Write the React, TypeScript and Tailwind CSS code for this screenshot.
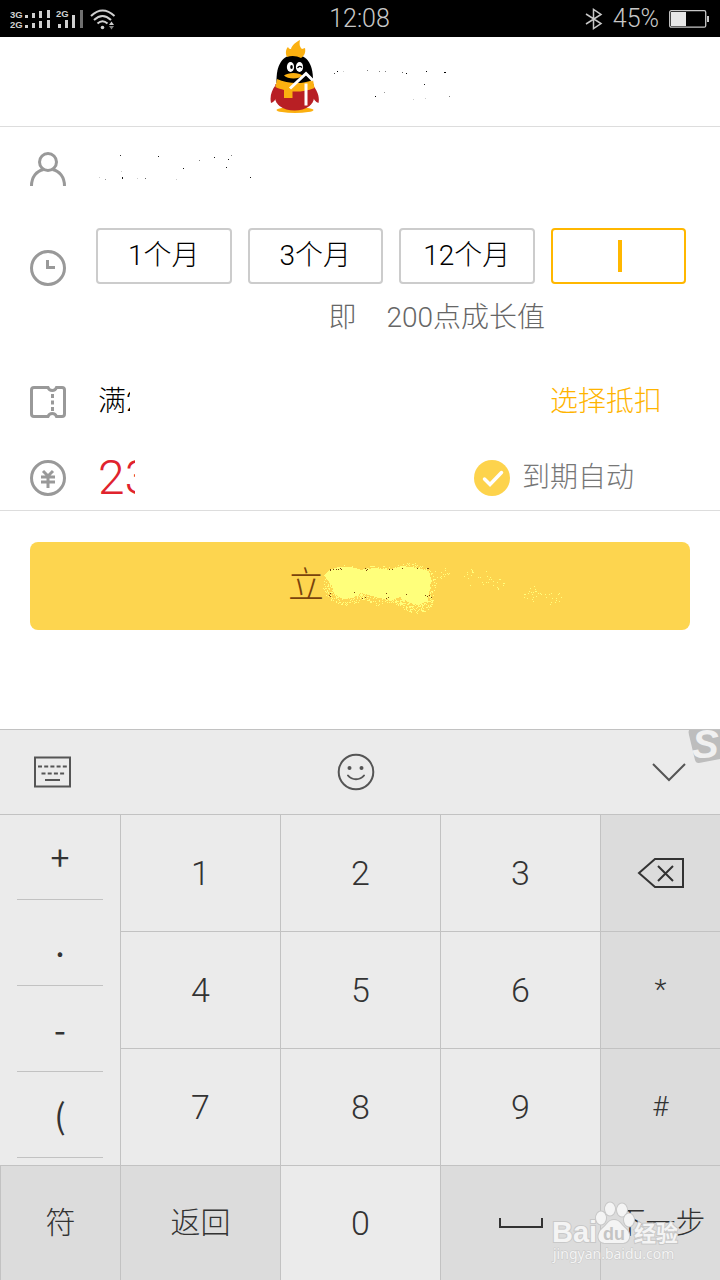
import { useState } from "react";
import type { ReactNode } from "react";

type Speck = [x: number, y: number, opacity: number];

const MONTHS = ["1个月", "3个月", "12个月"];
const SYMBOLS = ["+", ".", "-", "("];

const HEADER_SPECKS: Speck[] = [
  [4, 33, 0.7], [7, 31, 1], [13, 31, 0.2], [37, 30, 0.5], [49, 31, 0.5],
  [55, 31, 0.5], [72, 32, 0.6], [76, 33, 1], [96, 31, 1], [114, 32, 1],
  [115, 32, 1], [94, 44, 0.9], [45, 56, 1], [54, 52, 0.4], [83, 59, 0.2],
  [95, 58, 0.2], [119, 56, 0.5],
];

const ACCOUNT_SPECKS: Speck[] = [
  [24, 5, 0.8], [62, 6, 0.9], [87, 18, 0.9], [103, 10, 0.5], [118, 7, 0.9],
  [132, 9, 0.9], [135, 5, 0.5], [130, 17, 0.9], [154, 27, 0.9], [26, 27, 0.9],
  [26, 28, 0.9], [9, 29, 0.4], [49, 28, 0.6], [41, 28, 0.2], [80, 29, 0.2],
  [3, 27, 0.2], [25, 21, 0.2],
];

// seeded generator, so the spray looks the same on every render
function spray(seed: number, count: number, cx: number, cy: number, rx: number, ry: number) {
  let s = seed;
  const next = () => {
    s = (s * 16807) % 2147483647;
    return s / 2147483647;
  };
  return Array.from({ length: count }, () => {
    const angle = next() * Math.PI * 2;
    const radius = Math.sqrt(next());
    return [
      Math.round(cx + Math.cos(angle) * radius * rx),
      Math.round(cy + Math.sin(angle) * radius * ry),
    ];
  });
}

const SPRAY = [
  ...spray(11, 420, 22, 26, 23, 20),
  ...spray(23, 420, 54, 26, 26, 20),
  ...spray(37, 460, 86, 26, 26, 23),
  ...spray(41, 200, 92, 42, 17, 12),
  ...spray(53, 16, 116, 14, 9, 6),
  ...spray(67, 18, 152, 18, 15, 9),
  ...spray(71, 16, 172, 24, 12, 6),
  ...spray(83, 22, 208, 35, 9, 8),
  ...spray(97, 16, 229, 38, 9, 8),
];

const INK: [number, number][] = [
  [6, 10], [6, 11], [9, 10], [12, 10], [14, 10], [16, 9], [17, 10], [41, 9],
  [42, 11], [43, 10], [65, 10], [68, 10], [78, 9], [93, 9], [103, 9], [104, 9],
  [5, 36], [6, 34], [6, 37], [30, 33], [38, 39], [41, 38], [62, 34], [64, 38],
  [82, 35], [101, 36], [103, 37], [105, 36], [107, 38], [62, 39],
];

function Specks({ items, className }: { items: Speck[]; className: string }) {
  return (
    <svg className={className} aria-hidden="true" shapeRendering="crispEdges">
      {items.map(([x, y, opacity]) => (
        <rect key={`${x}-${y}`} x={x} y={y} width="1" height="1" fill="#000" opacity={opacity} />
      ))}
    </svg>
  );
}

function StatusBar() {
  return (
    <div className="grid h-[37px] grid-cols-3 items-center bg-black pr-[11px] pl-2.5 text-[#c8c8c8]">
      <svg width="110" height="24" viewBox="0 0 110 24" fill="#d0d0d0" aria-hidden="true">
        <g fontFamily="Liberation Sans" fontWeight="700" fontSize="9.5">
          <text x="0" y="11">3G</text>
          <text x="0" y="21">2G</text>
          <text x="46" y="10">2G</text>
        </g>
        {[11, 21].map((y) => (
          <g key={y}>
            <rect x="15" y={y - 3} width="3" height="3" />
            <rect x="22" y={y - 5} width="3" height="5" />
            <rect x="29" y={y - 7} width="3" height="7" />
            <rect x="37" y={y - 8} width="3" height="8" />
          </g>
        ))}
        <rect x="48" y="17" width="3" height="4" />
        <rect x="55" y="13" width="3" height="8" />
        <rect x="62" y="8" width="3" height="13" />
        <rect x="70" y="3" width="3" height="18" fill="#707070" />
        <g fill="none" stroke="#d0d0d0" strokeWidth="2">
          <path d="M81 9q11.500-11 23.500 0" />
          <path d="M84 13q8.500-8 17 0" />
          <path d="M87.500 16.500q5-4.500 10 0" />
        </g>
        <circle cx="92.500" cy="20.500" r="1.800" />
        <path d="m101.500 14.500 2.500 3.500h-5z" />
        <path d="m101.500 22.500 2.500-3.500h-5z" fill="#888" />
      </svg>
      <span className="text-center text-[25px] leading-8 font-light">12:08</span>
      <div className="flex items-center justify-end gap-2.5">
        <svg width="18" height="22" viewBox="0 0 18 22" fill="none" stroke="#c8c8c8" strokeWidth="1.500" aria-hidden="true">
          <path d="m1 6 15 9.500-7.500 5v-19l7.500 5L1 16" />
        </svg>
        <span className="text-[25px] leading-8 font-light">45%</span>
        <svg width="40" height="20" viewBox="0 0 40 20" aria-hidden="true">
          <rect x="0.700" y="1.700" width="36" height="16.500" rx="1.500" fill="none" stroke="#c8c8c8" strokeWidth="1.300" />
          <rect x="2" y="3" width="15" height="14" fill="#e6e6e6" />
          <rect x="38" y="7" width="2" height="6" fill="#c8c8c8" />
        </svg>
      </div>
    </div>
  );
}

function Penguin() {
  return (
    <svg width="50" height="74" viewBox="0 0 50 74" aria-hidden="true">
      <ellipse cx="25" cy="70" rx="18.500" ry="3" fill="#fbb010" />
      <path d="M5 46C2 50-.5 56 1 63c3-1 5-4 6.500-8zM43.500 46c3 4 6.500 10 5 17-3-1-5-4-6.500-8z" fill="#b81f24" />
      <path d="M5.500 44h38c2 11 1 18-4 22-8 6-22 6-30 0-5-4-6-11-4-22z" fill="#b81f24" />
      <path d="M6.500 43C6 25 12 15 25 15s18.500 10 18 28z" fill="#000" />
      <path d="M7 39c11 5 25 5.500 36 1l1.500 8c-8 3-15 4-22 3.500V58H14v-8c-3-1-6-1.500-8.500-3z" fill="#fbb010" />
      <path d="M17 17c-2-4-1-8 1-10 1 2 2 2 3 2 1-4 5-7 9-9-1 5 0 7 2 9l3-1c1 5-1 8-4 10-4-2-9-3-14-1z" fill="#fbb010" />
      <ellipse cx="20.500" cy="27" rx="3.600" ry="5" fill="#fff" />
      <ellipse cx="29.500" cy="27" rx="3.600" ry="5" fill="#fff" />
      <ellipse cx="21.500" cy="27" rx="1.300" ry="2" fill="#000" />
      <path d="M27.500 28q2-3 4.500-.5" fill="none" stroke="#000" strokeWidth="1.300" />
      <path d="M14 35.500c4-3.500 15-3.500 18.500 0-3 4-15 4-18.500 0z" fill="#fbb010" />
      <path d="M20 48.500 36 33.500l7 7M36 43.500v22" fill="none" stroke="#fff" strokeWidth="3" />
    </svg>
  );
}

function RowIcon({ children, className = "" }: { children: ReactNode; className?: string }) {
  return (
    <svg
      width="36"
      height="36"
      viewBox="0 0 36 36"
      fill="none"
      stroke="#999"
      strokeWidth="3"
      className={`shrink-0 ${className}`}
      aria-hidden="true"
    >
      {children}
    </svg>
  );
}

function OrderForm() {
  const [months, setMonths] = useState("");
  const [renew, setRenew] = useState(true);

  return (
    <section className="border-b border-[#ddd] pb-2 pl-[30px]">
      <div className="flex h-[84px] items-center gap-[30px]">
        <RowIcon>
          <circle cx="18" cy="11" r="8.500" />
          <path d="M1.500 35c0-9 5-15 12-16.500M34.500 35c0-9-5-15-12-16.500" />
        </RowIcon>
        <Specks items={ACCOUNT_SPECKS} className="h-[38px] w-40" />
      </div>

      <div className="flex gap-[30px] pt-[17px] pr-[34px]">
        <RowIcon className="mt-[22px]">
          <circle cx="18" cy="18" r="16.500" />
          <path d="M17.500 10v7.500H25" />
        </RowIcon>
        <div className="min-w-0 flex-1">
          <div className="grid grid-cols-4 gap-4">
            {MONTHS.map((label) => (
              <button
                key={label}
                type="button"
                onClick={() => setMonths(String(parseInt(label)))}
                className="h-14 rounded-sm border-2 border-[#ccc] text-[28px] leading-10 font-light text-black"
              >
                {label}
              </button>
            ))}
            <div className="relative h-14">
              <input
                aria-label="月数"
                inputMode="numeric"
                value={months}
                onChange={(e) => setMonths(e.target.value)}
                className="h-full w-full rounded-sm border-2 border-[#ffb700] text-center text-[28px] font-light caret-transparent outline-none"
              />
              {months === "" && (
                <span className="pointer-events-none absolute top-3 left-1/2 h-8 w-1 bg-[#ffb700]" />
              )}
            </div>
          </div>
          <p className="mt-3.5 flex justify-end gap-[30px] pr-[141px] text-[28px] leading-10 font-light text-[#666]">
            <span>即</span>
            <span>200点成长值</span>
          </p>
        </div>
      </div>

      <div className="mt-10 flex h-12 items-center gap-[30px] pr-[58px]">
        <RowIcon>
          <path d="M4 3.500h14c1.500 4 7 4 8.500 0H32q2.500 0 2.500 2.500v24q0 2.500-2.500 2.500h-5.500c-1.500-4-7-4-8.500 0H4q-2.500 0-2.500-2.500V6Q1.500 3.500 4 3.500z" />
          <path d="M22.500 10v17" strokeDasharray="4 2.500" />
        </RowIcon>
        <span className="w-[34px] overflow-hidden pl-0.5 text-[28px] leading-10 font-light whitespace-nowrap text-black">
          满2
        </span>
        <a href="#coupon" className="ml-auto text-[28px] leading-10 font-light text-[#ffb400]">
          选择抵扣
        </a>
      </div>

      <div className="mt-7 flex h-12 items-center gap-[30px] pr-[86px]">
        <RowIcon>
          <circle cx="18" cy="18" r="16.500" />
          <path d="m13 11 5 5 5-5M11 17h14M11 22h14M18 16v12" />
        </RowIcon>
        <span className="w-[39px] overflow-hidden pl-0.5 text-5xl leading-12 font-light whitespace-nowrap text-[#e0232d]">
          23
        </span>
        <label className="ml-auto flex items-center gap-3 text-[28px] leading-10 font-light text-[#777]">
          <span className="relative size-9">
            <input
              type="checkbox"
              checked={renew}
              onChange={(e) => setRenew(e.target.checked)}
              className="block size-9 appearance-none rounded-full bg-[#ddd] checked:bg-[#fdd34c]"
            />
            <svg
              viewBox="0 0 36 36"
              className="pointer-events-none absolute inset-0"
              fill="none"
              stroke="#fff"
              strokeWidth="3.500"
              strokeLinecap="round"
              aria-hidden="true"
            >
              <path d="m10.500 19 5.500 5.500L27.500 12.500" />
            </svg>
          </span>
          到期自动
        </label>
      </div>
    </section>
  );
}

function PayButton() {
  return (
    <button
      type="button"
      className="flex h-[88px] w-full items-center justify-center rounded-lg bg-[#fdd54f] text-4xl font-light text-[#7a430c]"
    >
      立
      <svg width="108" height="54" className="overflow-visible" shapeRendering="crispEdges" aria-hidden="true">
        <path
          d="M0 16 5 11 14 8h14l8 3 16-2 12 2 14-4 16 2 11 3 2 8-1 10-3 12-9 4-8-2-10-6-9 3-12-2-10-3-8-2-8 5-10 1-9-5-2-8z"
          fill="#ffff7b"
        />
        {SPRAY.map(([x, y], i) => (
          <rect key={i} x={x} y={y} width="1" height="1" fill="#ffff7b" />
        ))}
        {INK.map(([x, y]) => (
          <rect key={`${x}-${y}`} x={x} y={y} width="1" height="1" fill="#7a430c" />
        ))}
      </svg>
    </button>
  );
}

function Key({ children, dark = false, label }: { children: ReactNode; dark?: boolean; label?: string }) {
  return (
    <button
      type="button"
      aria-label={label}
      className={`flex items-center justify-center border-t border-l border-[#c2c2c2] ${dark ? "bg-[#dcdcdc]" : "bg-[#ebebeb]"}`}
    >
      {children}
    </button>
  );
}

function Digit({ value }: { value: string }) {
  return (
    <Key>
      <span className="text-[34px] leading-10">{value}</span>
    </Key>
  );
}

function Keyboard() {
  return (
    <section className="relative shrink-0 overflow-hidden border-t border-[#c2c2c2] bg-[#ebebeb] font-light text-[#333]">
      <div className="flex h-[84px] items-center justify-between px-[33px]">
        <button type="button" aria-label="切换键盘">
          <svg width="39" height="32" viewBox="0 0 39 32" fill="none" stroke="#555" strokeWidth="2">
            <rect x="2" y="1.500" width="35" height="29" />
            <path d="M5 10.500h30" strokeDasharray="4 2.200" />
            <path d="M8.500 17.500h23" strokeDasharray="4 2.200" />
            <path d="M12 24h15" />
          </svg>
        </button>
        <button type="button" aria-label="表情">
          <svg width="38" height="38" viewBox="0 0 38 38" fill="none" stroke="#555" strokeWidth="2">
            <circle cx="19" cy="19" r="17.300" />
            <path d="M11 22.500c4 5 12 5 16 0" strokeLinecap="round" />
            <circle cx="12.500" cy="15" r="2" fill="#555" stroke="none" />
            <circle cx="24.500" cy="15" r="2" fill="#555" stroke="none" />
          </svg>
        </button>
        <button type="button" aria-label="收起" className="flex w-12 justify-end">
          <svg width="36" height="20" viewBox="0 0 36 20" fill="none" stroke="#555" strokeWidth="2">
            <path d="m2 2 16 16L34 2" />
          </svg>
        </button>
      </div>

      <svg className="absolute top-0 right-0" width="32" height="34" viewBox="0 0 32 34" aria-hidden="true">
        <path d="M1 0h31v29L11 33q-3 .5-4-3L1 5q-1-3 0-5z" fill="#bdbdbd" />
        <text
          x="4"
          y="28"
          fontFamily="Liberation Sans"
          fontWeight="700"
          fontStyle="italic"
          fontSize="40"
          fill="#f0f0f0"
        >
          S
        </text>
      </svg>

      <div className="grid grid-cols-[3fr_4fr_4fr_4fr_3fr] grid-rows-[117px_117px_117px_115px]">
        <div className="row-span-3 border-t border-[#c2c2c2] px-[17px] font-['Noto_Sans_CJK_SC',sans-serif]">
          {SYMBOLS.map((symbol) => (
            <button
              key={symbol}
              type="button"
              className="flex h-[86px] w-full items-center justify-center border-b border-[#c2c2c2] text-[34px] leading-10 font-normal first:h-[85px]"
            >
              {symbol}
            </button>
          ))}
        </div>
        <Digit value="1" />
        <Digit value="2" />
        <Digit value="3" />
        <Key dark label="删除">
          <svg width="48" height="32" viewBox="0 0 48 32" fill="none" stroke="#333" strokeWidth="2">
            <path d="M18 2h28v28H18L2 16zM21 9l15 15M36 9 21 24" />
          </svg>
        </Key>
        <Digit value="4" />
        <Digit value="5" />
        <Digit value="6" />
        <Key dark>
          <span className="text-[28px] leading-8">*</span>
        </Key>
        <Digit value="7" />
        <Digit value="8" />
        <Digit value="9" />
        <Key dark>
          <span className="text-[28px] leading-8">#</span>
        </Key>
        <Key dark>
          <span className="text-3xl">符</span>
        </Key>
        <Key dark>
          <span className="text-3xl">返回</span>
        </Key>
        <Digit value="0" />
        <Key dark label="空格">
          <svg width="46" height="12" viewBox="0 0 46 12" fill="none" stroke="#333" strokeWidth="2">
            <path d="M2 1v9h42V1" />
          </svg>
        </Key>
        <Key dark>
          <span className="text-3xl whitespace-nowrap">下一步</span>
        </Key>
      </div>
      <Watermark />
    </section>
  );
}

function Watermark() {
  return (
    <svg
      className="pointer-events-none absolute right-9 bottom-3 overflow-visible"
      width="134"
      height="66"
      viewBox="0 0 134 66"
      fill="#f4f4f4"
      stroke="#c8c8c8"
      aria-hidden="true"
    >
      <g strokeWidth="2" paintOrder="stroke">
        <text x="2" y="40" fontFamily="Liberation Sans" fontWeight="700" fontSize="29">Bai</text>
        <ellipse cx="51" cy="16" rx="5" ry="6.500" />
        <ellipse cx="60" cy="7" rx="5" ry="6.500" />
        <ellipse cx="72" cy="8" rx="5" ry="6.500" />
        <ellipse cx="79" cy="18" rx="5" ry="6.500" />
        <path d="M64 18c6 0 7 5 11 8 7 6 5 15-3 15H56c-9 0-10-9-3-15 4-3 5-8 11-8z" />
        <text x="84" y="39" fontFamily="Noto Sans CJK SC" fontWeight="700" fontSize="22">经验</text>
      </g>
      <text x="53" y="38" fontFamily="Liberation Sans" fontWeight="700" fontSize="18" fill="#c4c4c4" stroke="none">
        du
      </text>
      <text x="3" y="57" fontFamily="Noto Sans" fontWeight="400" fontSize="14" strokeWidth="1" paintOrder="stroke">
        jingyan.baidu.com
      </text>
    </svg>
  );
}

export default function App() {
  return (
    <div className="flex min-h-screen flex-col bg-white font-['Roboto','Noto_Sans_CJK_SC',sans-serif]">
      <StatusBar />
      <header className="flex h-[90px] items-start justify-center gap-2.5 border-b border-[#ddd] pt-[3px]">
        <Penguin />
        <Specks items={HEADER_SPECKS} className="h-[74px] w-[120px]" />
      </header>
      <main className="flex-1">
        <OrderForm />
        <div className="px-[30px] pt-[31px] pb-8">
          <PayButton />
        </div>
      </main>
      <Keyboard />
    </div>
  );
}
